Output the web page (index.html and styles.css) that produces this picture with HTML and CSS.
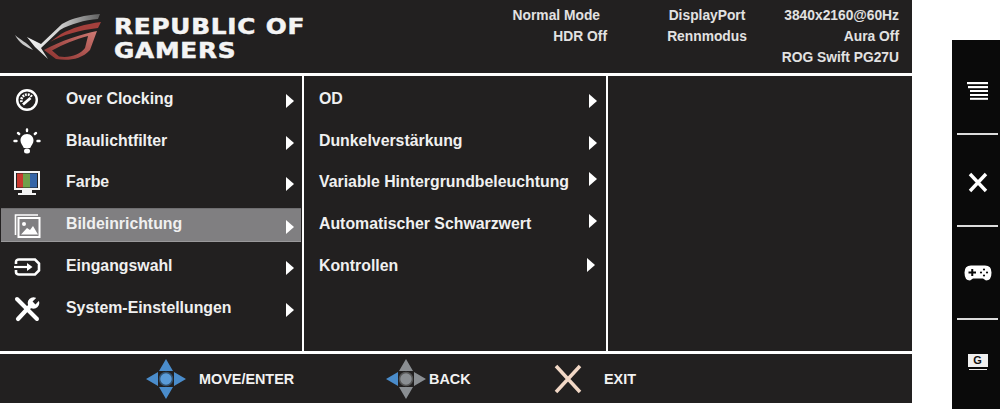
FILE: index.html
```html
<html>

<head>
    <meta charset="utf-8" />
    <title>ROG Swift PG27U OSD</title>
    <link rel="stylesheet" href="styles.css">
</head>

<body>
    <div class="screen">
        <div class="osd">
            <header class="topbar">
                <div class="brand">
                    <svg class="rog-eye" width="88" height="52" viewBox="15 13 88 52">
                        <defs>
                            <linearGradient id="blade" x1="0" y1="0" x2="1" y2="0">
                                <stop offset="0" stop-color="#f4f4f4" />
                                <stop offset="0.45" stop-color="#d0d0d0" />
                                <stop offset="1" stop-color="#5f5f5f" />
                            </linearGradient>
                            <linearGradient id="eye" x1="0" y1="1" x2="1" y2="0">
                                <stop offset="0" stop-color="#8a2f2c" />
                                <stop offset="1" stop-color="#cf7a74" />
                            </linearGradient>
                        </defs>
                        <path d="M15 35 C20 40 27 42 33 50 C26 47 19 43 15 35 Z" fill="#c8c8c8" />
                        <path d="M100 14 C85 15 72 18 62 24 L41 44 L27 37 L35 47 L48 59 L41 48 L60 30 C70 24 85 20 98 19 Z" fill="url(#blade)" />
                        <path d="M101 22 C85 24 72 28 61 34 L50 42 C62 35 80 30 98 28 Z" fill="#a5403c" />
                        <path fill-rule="evenodd" d="M97 31 C82 34 60 41 44 50 L56 59 C67 61 81 60 90 50 Z M88 36 C76 39 62 45 52 50.500 L59 56.500 C70 58 80 55 85 48 Z" fill="url(#eye)" />
                    </svg>
                    <div class="wordmark">REPUBLIC OF<br>GAMERS</div>
                </div>
                <div class="status">
                    <span class="st-a st-n">Normal Mode</span>
                    <span class="st-b">DisplayPort</span>
                    <span class="st-c">3840x2160@60Hz</span>
                    <span class="st-a">HDR Off</span>
                    <span class="st-b">Rennmodus</span>
                    <span class="st-c">Aura Off</span>
                    <span class="st-a"></span>
                    <span class="st-b"></span>
                    <span class="st-c">ROG Swift PG27U</span>
                </div>
            </header>
            <main class="panels">
                <div class="col col-main">
                    <div class="item">
                        <svg class="ic" width="28" height="28" viewBox="0 0 28 28" fill="none" stroke="#fff">
                            <circle cx="14" cy="14" r="9.800" stroke-width="2.400" />
                            <path d="M8.500 16 A6 6 0 0 1 19.500 11.500" stroke-width="2.600" stroke-dasharray="1.800 1" />
                            <path d="M10 18.500 L17.500 12" stroke-width="2.800" />
                        </svg>
                        <span class="lbl">Over Clocking</span><i class="arr"></i>
                    </div>
                    <div class="item">
                        <svg class="ic" width="28" height="28" viewBox="0 0 28 28" fill="#fff">
                            <path d="M14 6 C9.800 6 7.500 9 7.500 12.500 C7.500 15.500 9.500 17 10.800 20 L17.200 20 C18.500 17 20.500 15.500 20.500 12.500 C20.500 9 18.200 6 14 6 Z" />
                            <rect x="11" y="20.500" width="6" height="5" rx="2.500" />
                            <g stroke="#fff" stroke-width="2.400" stroke-linecap="round">
                                <path d="M1.500 13 L3.500 13 M24.500 13 L26.500 13 M14 1.500 L14 3 M5 5 L6.200 6 M23 5 L21.800 6" />
                            </g>
                        </svg>
                        <span class="lbl">Blaulichtfilter</span><i class="arr"></i>
                    </div>
                    <div class="item">
                        <svg class="ic" width="28" height="26" viewBox="0 0 28 26">
                            <rect x="1" y="1" width="26" height="19" fill="#f4f4f4" />
                            <rect x="3" y="3" width="22" height="15" fill="#222" />
                            <rect x="4" y="3.500" width="6" height="14" fill="#c8392f" />
                            <rect x="10" y="3.500" width="7" height="14" fill="#6fa04a" />
                            <rect x="17" y="3.500" width="7" height="14" fill="#3565a8" />
                            <rect x="9" y="20" width="10" height="3" fill="#f4f4f4" />
                            <rect x="5" y="23" width="18" height="2" fill="#f4f4f4" />
                        </svg>
                        <span class="lbl">Farbe</span><i class="arr"></i>
                    </div>
                    <div class="item item-on">
                        <svg class="ic" width="28" height="26" viewBox="0 0 28 26" fill="none" stroke="#fff" stroke-width="1.600">
                            <path d="M2.500 22 L2.500 2 L25 2" />
                            <rect x="5.500" y="5" width="21" height="19" stroke-width="2" />
                            <circle cx="11" cy="11" r="2" fill="#fff" stroke="none" />
                            <path d="M8 21.500 L14 15 L17 17 L20 13 L25 21.500 Z" fill="#fff" stroke="none" />
                        </svg>
                        <span class="lbl">Bildeinrichtung</span><i class="arr"></i>
                    </div>
                    <div class="item">
                        <svg class="ic" width="28" height="20" viewBox="0 0 28 20" fill="none" stroke="#fff" stroke-width="2.600">
                            <path d="M3 7 L3 5 Q3 2.500 6 2.500 L22 2.500 L26 6.500 L26 13.500 L22 17.500 L6 17.500 Q3 17.500 3 15 L3 13" />
                            <path d="M1 10 L17 10" stroke-width="2.200" />
                            <path d="M14 6 L19.500 10 L14 14 Z" fill="#fff" stroke="none" />
                        </svg>
                        <span class="lbl">Eingangswahl</span><i class="arr"></i>
                    </div>
                    <div class="item">
                        <svg class="ic" width="28" height="26" viewBox="0 0 28 26">
                            <path d="M4 3 L24 23" stroke="#fff" stroke-width="4" stroke-linecap="round" fill="none" />
                            <path d="M5 23 L18 9" stroke="#fff" stroke-width="4.200" stroke-linecap="round" fill="none" />
                            <circle cx="20.500" cy="7" r="5.800" fill="#fff" />
                            <path d="M21 7 L27 1" stroke="#222020" stroke-width="4" fill="none" />
                        </svg>
                        <span class="lbl">System-Einstellungen</span><i class="arr"></i>
                    </div>
                </div>
                <div class="col col-sub">
                    <div class="item"><span class="lbl">OD</span><i class="arr"></i></div>
                    <div class="item"><span class="lbl">Dunkelverstärkung</span><i class="arr"></i></div>
                    <div class="item"><span class="lbl">Variable Hintergrundbeleuchtung</span><i class="arr arr-up"></i></div>
                    <div class="item"><span class="lbl">Automatischer Schwarzwert</span><i class="arr arr-up"></i></div>
                    <div class="item"><span class="lbl">Kontrollen</span><i class="arr arr-last"></i></div>
                </div>
                <div class="col col-empty"></div>
            </main>
            <footer class="hints">
                <div class="hint hint-move">
                    <svg width="40" height="40" viewBox="0 0 40 40">
                        <path d="M20 0 L27 12 L13 12 Z M20 40 L27 28 L13 28 Z M0 20 L12 13 L12 27 Z M40 20 L28 13 L28 27 Z" fill="#4a8ccb" />
                        <circle cx="20" cy="20" r="6.500" fill="#5a9bd8" stroke="#33516e" stroke-width="1.500" />
                    </svg>
                    <span>MOVE/ENTER</span>
                </div>
                <div class="hint hint-back">
                    <svg width="40" height="40" viewBox="0 0 40 40">
                        <path d="M20 0 L27 12 L13 12 Z M20 40 L27 28 L13 28 Z M40 20 L28 13 L28 27 Z" fill="#8a8e92" />
                        <path d="M0 20 L12 13 L12 27 Z" fill="#4a8ccb" />
                        <circle cx="20" cy="20" r="6.500" fill="#8a8e92" stroke="#555" stroke-width="1.500" />
                    </svg>
                    <span>BACK</span>
                </div>
                <div class="hint hint-exit">
                    <svg width="30" height="30" viewBox="0 0 30 30">
                        <path d="M3 2 L27 28 M27 2 L3 28" stroke="#f2d8c6" stroke-width="3.500" fill="none" />
                    </svg>
                    <span>EXIT</span>
                </div>
            </footer>
        </div>
        <aside class="keys">
            <div class="key key-menu">
                <svg width="21" height="18" viewBox="0 0 21 18" fill="#fff">
                    <rect x="0" y="0" width="21" height="2.200" />
                    <rect x="1" y="4" width="20" height="2.200" />
                    <rect x="3" y="8" width="18" height="2" />
                    <rect x="3" y="12" width="18" height="2" />
                    <rect x="3" y="15.800" width="18" height="2" />
                </svg>
            </div>
            <div class="key key-close">
                <svg width="20" height="21" viewBox="0 0 20 21">
                    <path d="M2 2 L18 19 M18 2 L2 19" stroke="#fff" stroke-width="3.400" fill="none" />
                </svg>
            </div>
            <div class="key key-game">
                <svg width="28" height="16" viewBox="0 0 28 16">
                    <path d="M7 0.500 L21 0.500 Q27.500 0.500 27.500 7.500 Q27.500 15.500 22 15.500 L19 13.500 L9 13.500 L6 15.500 Q0.500 15.500 0.500 7.500 Q0.500 0.500 7 0.500 Z" fill="#fff" />
                    <path d="M4.500 7.500 L12 7.500 M8.250 4 L8.250 11" stroke="#0a0a0a" stroke-width="2" />
                    <circle cx="20" cy="4.500" r="1.100" fill="#0a0a0a" /><circle cx="20" cy="10.500" r="1.100" fill="#0a0a0a" />
                    <circle cx="17" cy="7.500" r="1.100" fill="#0a0a0a" /><circle cx="23" cy="7.500" r="1.100" fill="#0a0a0a" />
                </svg>
            </div>
            <div class="key key-gsync">
                <div class="gsync">G</div>
            </div>
        </aside>
    </div>
</body>

</html>
```

FILE: styles.css
```css
* {
    box-sizing: border-box;
}

html,
body {
    font-family: 'Liberation Sans', Arial, sans-serif;
    padding: 0;
    margin: 0;
    background: #fff;
    overflow: hidden;
}

.screen {
    display: flex;
    justify-content: space-between;
    width: 1000px;
    height: 409px;
}

.osd {
    display: flex;
    flex-direction: column;
    width: 912px;
    height: 403px;
    background: #fff;
}

.topbar {
    display: flex;
    justify-content: space-between;
    height: 73px;
    background: #222020;
}

.brand {
    display: flex;
    align-items: flex-start;
    padding: 13px 0 0 15px;
}

.rog-eye {
    flex: none;
}

.wordmark {
    margin: 2px 0 0 11px;
    color: #f4f4f4;
    font-family: 'DejaVu Sans', sans-serif;
    font-size: 20.600px;
    font-weight: 700;
    line-height: 24px;
    letter-spacing: 0.650px;
    white-space: nowrap;
    -webkit-text-stroke: 0.500px #f4f4f4;
    transform: scaleX(1.2);
    transform-origin: 0 0;
}

.status {
    display: grid;
    grid-template-columns: 140px 120px 132px;
    grid-auto-rows: 21px;
    padding: 5px 13px 0 0;
    color: #e2e2e2;
    font-size: 13.800px;
    font-weight: 700;
    line-height: 21px;
    white-space: nowrap;
}

.st-b {
    text-align: center;
}

.st-c,
.st-a {
    text-align: right;
}

.st-a {
    padding-right: 40px;
}

.st-n {
    padding-right: 47px;
}

.panels {
    display: flex;
    gap: 2px;
    height: 275px;
    margin-top: 3px;
}

.col {
    background: #222020;
    padding-top: 2px;
}

.col-main {
    width: 302px;
}

.col-sub {
    width: 302px;
}

.col-empty {
    width: 304px;
}

.item {
    display: flex;
    align-items: center;
    position: relative;
    height: 41.800px;
    color: #f0f0f0;
    font-size: 15.850px;
    font-weight: 700;
}

.col-main .item {
    padding-left: 66px;
}

.col-sub .item {
    padding-left: 15px;
}

.item-on {
    background: #807f81;
    height: 34px;
    margin: 5px 1px 2.800px 1px;
    padding-bottom: 2px;
    border-top: 1px solid #6f6e70;
    border-bottom: 1px solid #9a999b;
}

.col-main .item-on {
    padding-left: 65px;
}

.ic {
    position: absolute;
    left: 13px;
    top: 50%;
    transform: translateY(-50%);
    margin-top: 1px;
}

.item-on .ic {
    left: 12px;
}

.arr {
    position: absolute;
    right: 8px;
    top: 50%;
    margin-top: -5px;
    border-left: 8px solid #fff;
    border-top: 7px solid transparent;
    border-bottom: 7px solid transparent;
}

.item-on .arr {
    right: 7px;
}

.col-sub .arr {
    right: 9px;
}

.col-sub .arr-up {
    margin-top: -10px;
}

.col-sub .arr-last {
    margin-top: -8px;
    right: 11px;
}

.hints {
    display: flex;
    align-items: center;
    height: 49px;
    margin-top: 3px;
    padding-left: 146px;
    background: #222020;
    color: #f2f2f2;
    font-size: 14.400px;
    font-weight: 700;
}

.hint {
    display: flex;
    align-items: center;
}

.hint-move {
    width: 240px;
    gap: 13px;
}

.hint-back {
    width: 167px;
    gap: 3px;
}

.hint-exit {
    gap: 21px;
}

.keys {
    display: flex;
    flex-direction: column;
    width: 48px;
    height: 369px;
    margin-top: 40px;
    padding: 0 2px 0 5px;
    background: #0a0a0a;
}

.key {
    display: flex;
    align-items: center;
    justify-content: center;
    flex: none;
    border-bottom: 2px solid #dcdcdc;
}

.key-menu {
    height: 95px;
    padding-top: 9px;
}

.key-close {
    height: 92px;
    padding-top: 4px;
}

.key-game {
    height: 93px;
    padding-top: 1px;
}

.key-gsync {
    height: 89px;
    padding-bottom: 9px;
    border-bottom: 0;
}

.gsync {
    width: 20px;
    height: 13px;
    background: #f0f0f0;
    color: #111;
    font-size: 11px;
    font-weight: 700;
    line-height: 13px;
    text-align: center;
    box-shadow: 0 3px 0 -1px #0a0a0a, 0 4px 0 -1px #eee;
}
```
